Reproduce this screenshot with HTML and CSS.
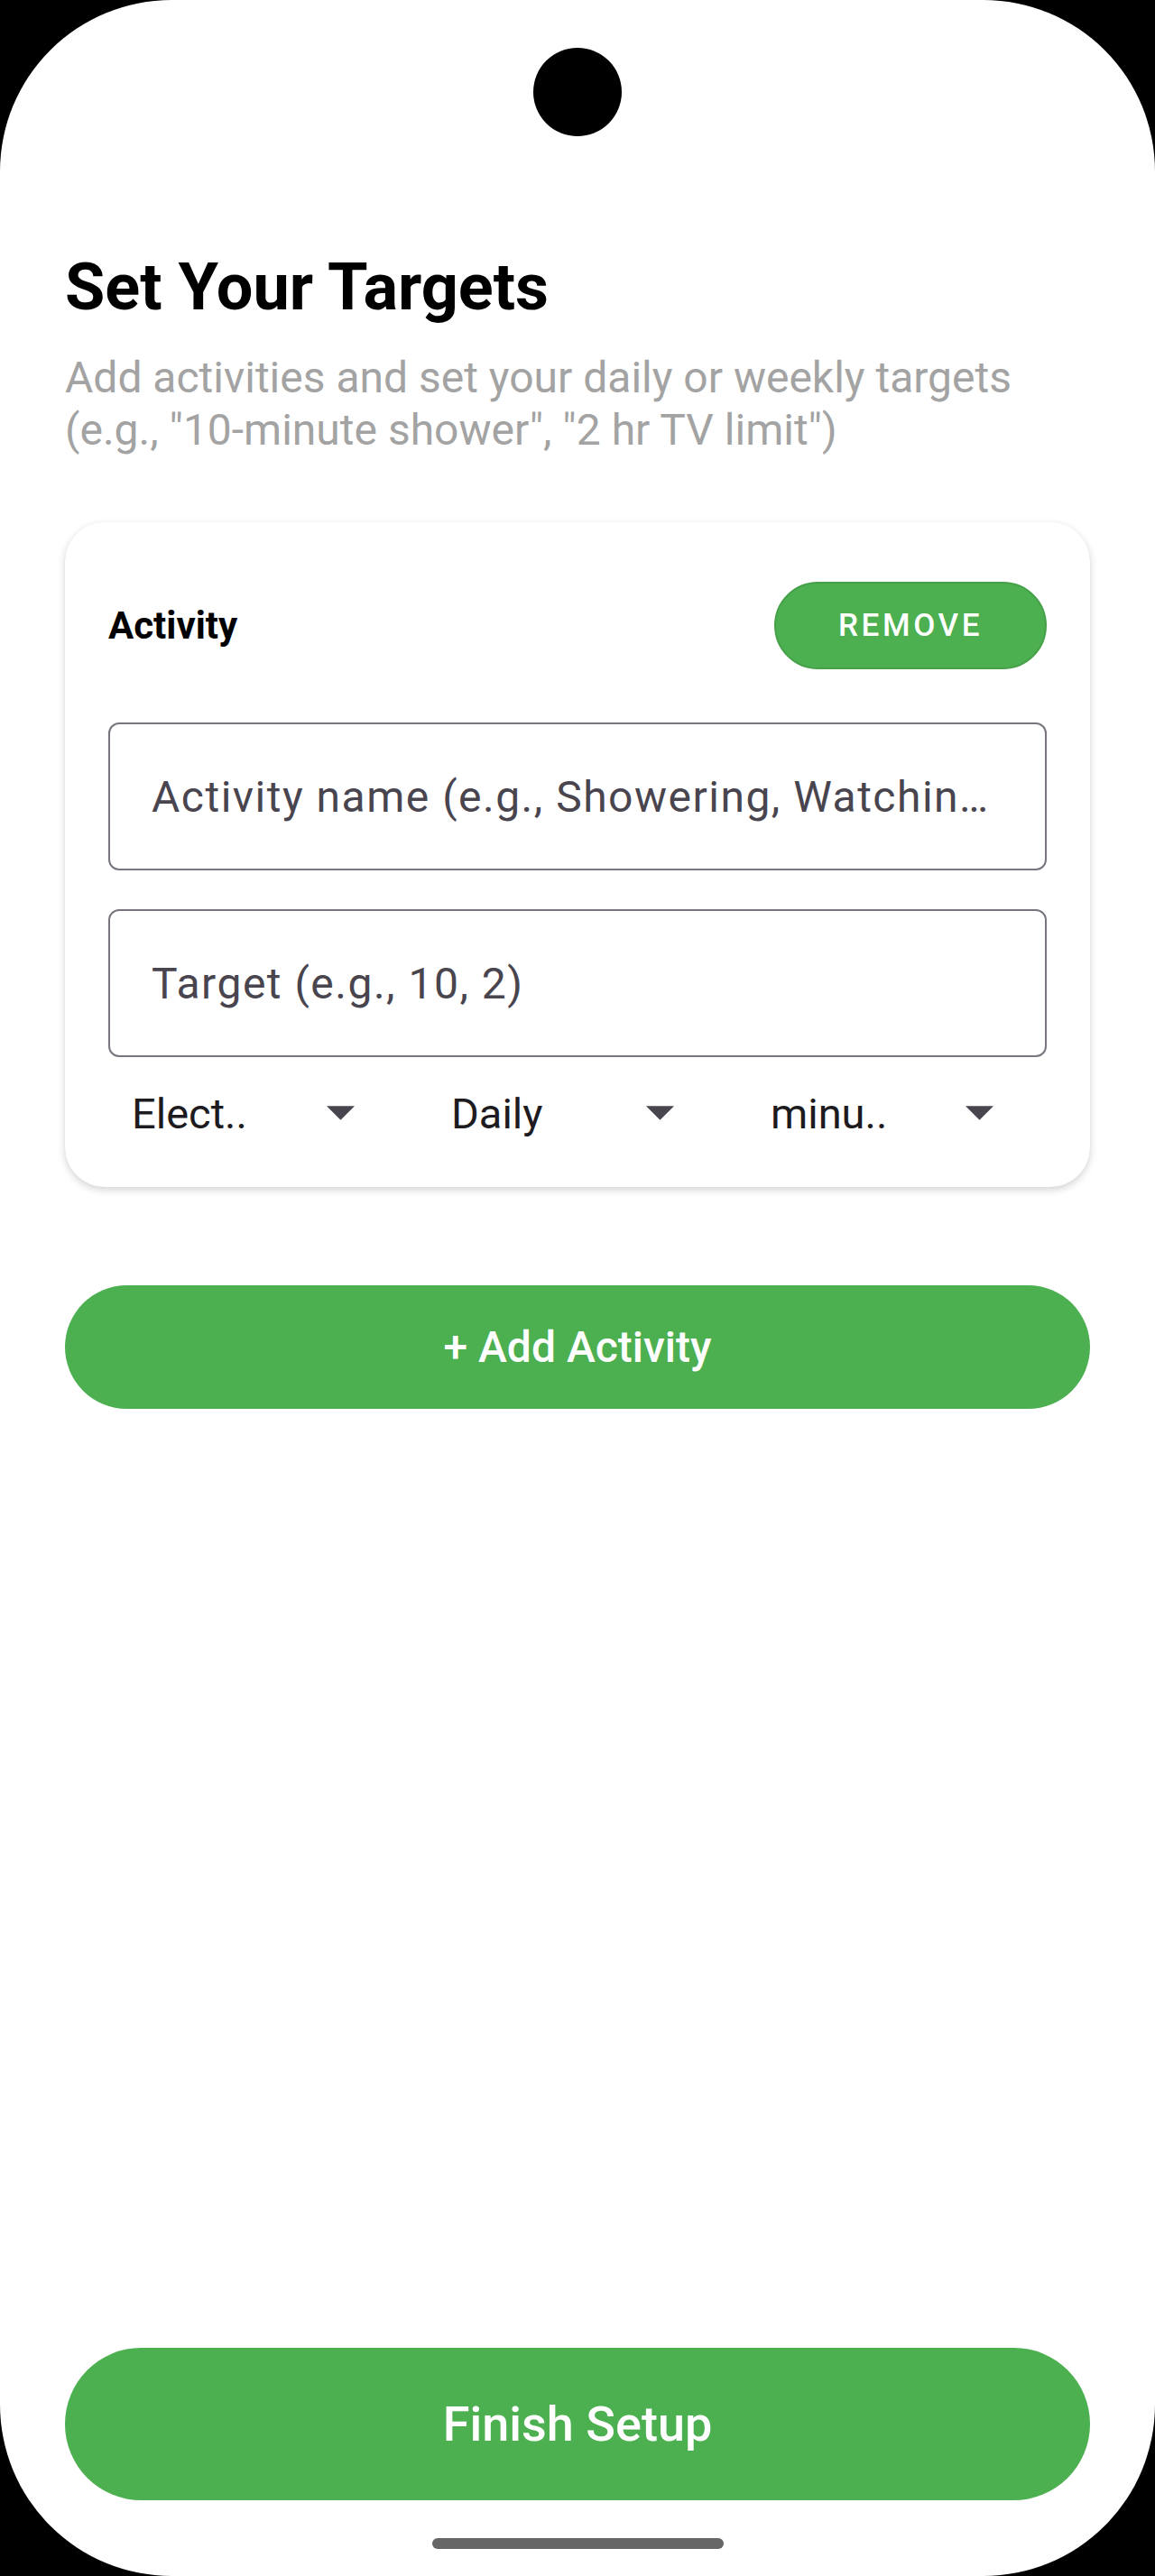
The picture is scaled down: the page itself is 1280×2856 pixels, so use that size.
FILE: index.html
```html
<!DOCTYPE html>
<html lang="en">
<head>
  <meta charset="UTF-8" />
  <meta name="viewport" content="width=device-width, initial-scale=1.0"/>
  <title>Set Your Targets</title>
  <link rel="stylesheet" href="styles.css">
</head>
<body>
  <div class="screen">
    <div class="camera"></div>

    <h1>Set Your Targets</h1>
    <p class="subtitle">Add activities and set your daily or weekly targets (e.g., "10-minute shower", "2 hr TV limit")</p>

    <div class="card">
      <div class="card-header">
        <span class="card-title">Activity</span>
        <button class="remove-button">Remove</button>
      </div>

      <input class="field" type="text" placeholder="Activity name (e.g., Showering, Watching TV)" />
      <input class="field" type="text" placeholder="Target (e.g., 10, 2)" />

      <div class="dropdowns">
        <div class="dropdown">
          <span>Elect..</span>
          <svg viewBox="0 0 30 15"><path d="M0 0h30L15 15z" /></svg>
        </div>
        <div class="dropdown">
          <span>Daily</span>
          <svg viewBox="0 0 30 15"><path d="M0 0h30L15 15z" /></svg>
        </div>
        <div class="dropdown">
          <span>minu..</span>
          <svg viewBox="0 0 30 15"><path d="M0 0h30L15 15z" /></svg>
        </div>
      </div>
    </div>

    <button class="big-button add-button">+ Add Activity</button>

    <button class="big-button finish-button">Finish Setup</button>

    <div class="home-bar"></div>
  </div>
</body>
</html>
```

FILE: styles.css
```css
* {
  margin: 0;
  padding: 0;
  box-sizing: border-box;
}

body {
  background: #000;
  font-family: Roboto, 'Noto Sans', sans-serif;
}

.screen {
  position: relative;
  width: 1280px;
  height: 2856px;
  background: #fff;
  border-radius: 190px;
  overflow: hidden;
  display: flex;
  flex-direction: column;
  padding: 275px 72px 84px;
}

.camera {
  position: absolute;
  top: 53px;
  left: 591px;
  width: 98px;
  height: 98px;
  border-radius: 50%;
  background: #000;
}

h1 {
  font-size: 72px;
  line-height: 88px;
  font-weight: 700;
  color: #000;
}

.subtitle {
  margin-top: 27px;
  font-size: 48px;
  line-height: 58px;
  color: #a3a3a3;
}

.card {
  margin-top: 73px;
  background: #fff;
  border-radius: 44px;
  padding: 66px 48px 20px;
  box-shadow: 0 3px 8px rgba(0, 0, 0, 0.18), 0 0 1px rgba(0, 0, 0, 0.05);
}

.card-header {
  display: flex;
  justify-content: space-between;
  align-items: center;
  margin-bottom: 59px;
}

.card-title {
  font-size: 42px;
  font-weight: 700;
  color: #000;
}

.remove-button {
  width: 302px;
  height: 97px;
  border-radius: 49px;
  background: #4caf50;
  border: 2px solid #46a04a;
  color: #fff;
  font-family: inherit;
  font-size: 35px;
  font-weight: 500;
  letter-spacing: 3.6px;
  text-transform: uppercase;
}

.field {
  display: block;
  width: 100%;
  height: 164px;
  border: 2px solid #79747e;
  border-radius: 12px;
  padding: 0 48px 0 46px;
  font-family: inherit;
  font-size: 48px;
  letter-spacing: 1.5px;
  color: #1d1b20;
  text-overflow: ellipsis;
  outline: none;
}

.field::placeholder {
  color: #49454f;
}

.field + .field {
  margin-top: 43px;
}

.dropdowns {
  display: grid;
  grid-template-columns: repeat(3, 354px);
  height: 124px;
}

.dropdown {
  display: flex;
  align-items: center;
  justify-content: space-between;
  padding: 0 81px 0 26px;
  font-size: 47px;
  color: #1d1b20;
}

.dropdown svg {
  width: 31px;
  height: 16px;
  fill: #49454f;
}

.big-button {
  border: none;
  background: #4caf50;
  color: #fff;
  font-family: inherit;
  font-weight: 500;
}

.add-button {
  margin-top: 109px;
  height: 137px;
  border-radius: 69px;
  font-size: 48px;
}

.finish-button {
  margin-top: auto;
  height: 169px;
  border-radius: 85px;
  font-size: 54px;
}

.home-bar {
  position: absolute;
  left: 479px;
  bottom: 30px;
  width: 323px;
  height: 12px;
  border-radius: 6px;
  background: #666;
}
```
